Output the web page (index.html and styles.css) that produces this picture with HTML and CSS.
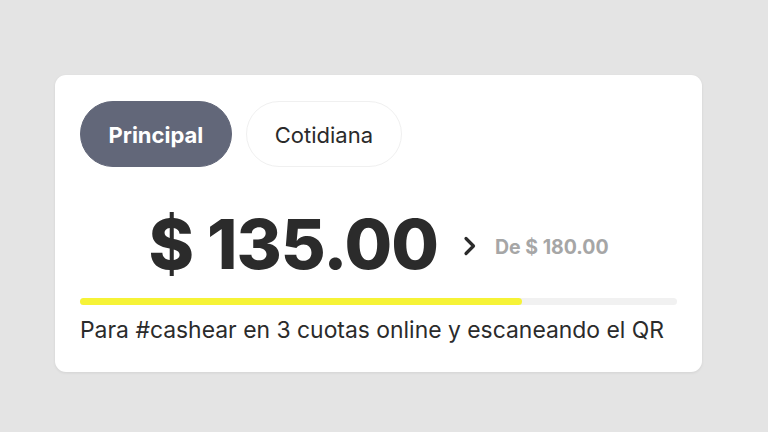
FILE: index.html
```html
<!DOCTYPE html>
<html lang="es">
  <head>
    <meta charset="UTF-8" />
    <meta name="viewport" content="width=device-width, initial-scale=1.0" />
    <title>Cashear</title>
    <link rel="stylesheet" href="styles.css">
  </head>
  <body>
    <div id="card">
      <div id="tabs">
        <button class="tab active">Principal</button>
        <button class="tab">Cotidiana</button>
      </div>
      <div id="price_row">
        <span id="price">$ 135.00</span>
        <svg id="chevron" width="14" height="20" viewBox="0 0 14 20">
          <path d="M3 2.5 L10.5 10 L3 17.5" fill="none" stroke="#2b2b2b" stroke-width="3.2" stroke-linecap="round" stroke-linejoin="round" />
        </svg>
        <span id="limit">De $ 180.00</span>
      </div>
      <div id="bar">
        <div id="bar_fill" style="width: 74%"></div>
      </div>
      <p id="caption">Para #cashear en 3 cuotas online y escaneando el QR</p>
    </div>
  </body>
</html>
```

FILE: styles.css
```css
body {
  margin: 0;
  width: 768px;
  height: 432px;
  background-color: #e4e4e4;
  font-family: Inter, "Liberation Sans", sans-serif;
}
#card {
  margin: 75px 0 0 55px;
  width: 647px;
  height: 297px;
  box-sizing: border-box;
  padding: 26px 25px 0 25px;
  background-color: #ffffff;
  border-radius: 11px;
  box-shadow: 0 1px 3px rgba(0, 0, 0, 0.08);
}
#tabs {
  display: flex;
  gap: 14px;
}
.tab {
  height: 66px;
  padding: 2px 28px 0 28px;
  border-radius: 33px;
  border: 1px solid #f0f0f0;
  background-color: #ffffff;
  color: #2a2a2a;
  font-family: Inter, "Liberation Sans", sans-serif;
  font-size: 22px;
  font-weight: 400;
}
.tab.active {
  padding: 2px 27.5px 0 27.5px;
  background-color: #626779;
  border-color: #626779;
  color: #ffffff;
  font-weight: 700;
}
#price_row {
  display: flex;
  justify-content: center;
  align-items: center;
  height: 100px;
  margin-top: 27px;
}
#price {
  font-size: 69px;
  font-weight: 800;
  color: #2b2b2b;
  letter-spacing: -1px;
}
#chevron {
  margin: 4px 18px 0 25px;
}
#limit {
  margin-top: 5px;
  font-size: 19.5px;
  font-weight: 700;
  color: #a6a6a6;
}
#bar {
  height: 7px;
  border-radius: 4px;
  background-color: #f1f1f1;
  margin-top: 4px;
}
#bar_fill {
  height: 7px;
  border-radius: 4px;
  background-color: #f6f337;
}
#caption {
  margin: 11px 0 0 0;
  font-size: 22.9px;
  color: #2b2b2b;
}
```
